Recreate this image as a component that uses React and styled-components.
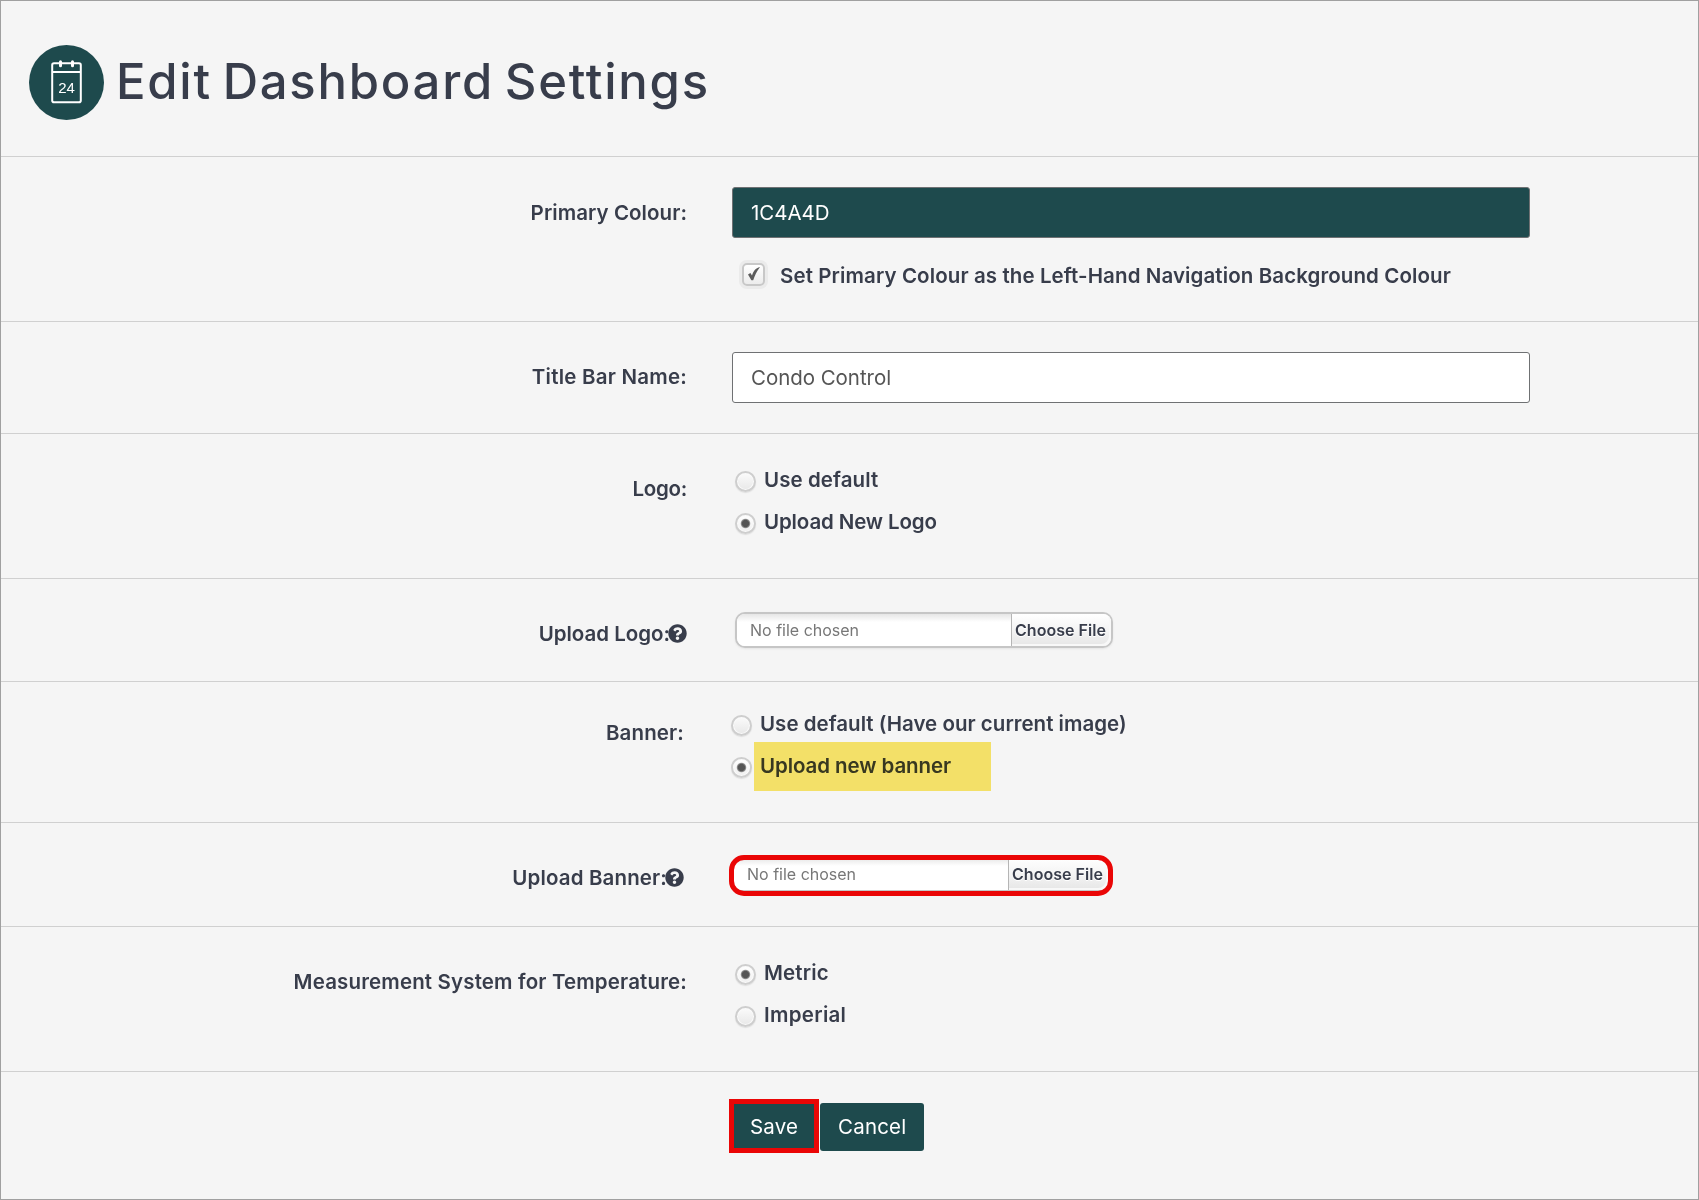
import React, { useState } from 'react';
import styled, { createGlobalStyle } from 'styled-components';
import { FaQuestionCircle } from 'react-icons/fa';

const GlobalStyle = createGlobalStyle`
  * {
    box-sizing: border-box;
  }

  body {
    margin: 0;
    background: #f5f5f5;
    color: #383d4b;
    font-family: Inter, "Liberation Sans", sans-serif;
    font-size: 20.5px;
    line-height: 30px;
  }
`;

const Page = styled.div`
  width: 1699px;
  height: 1200px;
  border: 1px solid #a0a0a0;
  background: #f5f5f5;
  overflow: hidden;
`;

const Header = styled.header`
  height: 156px;
  padding: 44px 0 0 28px;
  border-bottom: 1px solid #d0d0d0;
  display: flex;
  align-items: flex-start;
  gap: 12px;
`;

const Title = styled.h1`
  margin: 7px 0 0;
  font-size: 49px;
  line-height: 60px;
  font-weight: 520;
  letter-spacing: 1.75px;
  word-spacing: -4px;
`;

const Row = styled.div`
  height: ${(p) => p.$height}px;
  border-bottom: 1px solid #d0d0d0;
  display: grid;
  grid-template-columns: ${(p) => (p.$shifted ? 683 : 686)}px 1fr;
  column-gap: 45px;
  align-items: start;
`;

const Label = styled.div`
  margin-top: ${(p) => p.$top || 40}px;
  display: flex;
  justify-content: flex-end;
  align-items: center;
  font-weight: 640;
  letter-spacing: ${(p) => p.$track || 0}px;
  white-space: nowrap;

  svg {
    margin: -2px 0 0 -2px;
    font-size: 19px;
  }
`;

const Field = styled.div`
  padding-top: ${(p) => p.$top}px;
  padding-left: ${(p) => p.$left || 0}px;
`;

const TextBox = styled.input`
  display: block;
  width: 798px;
  height: 51px;
  padding: 0 18px;
  border: 1px solid #6f7173;
  border-radius: 3px;
  background: ${(p) => (p.$filled ? '#1e4a4d' : '#fff')};
  color: ${(p) => (p.$filled ? '#fff' : '#555')};
  font: 400 20.5px Inter, sans-serif;
  letter-spacing: -0.05px;
  outline: none;
`;

const CheckLine = styled.label`
  margin: 23px 0 0 10px;
  display: flex;
  align-items: center;
  gap: 15px;
  font-weight: 640;
  letter-spacing: 0.1px;
`;

const CheckBox = styled.span`
  width: 23px;
  height: 23px;
  margin-top: -4px;
  border: 2px solid #c8c8c8;
  border-radius: 5px;
  background: linear-gradient(#fff, #ececec);
  box-shadow: 0 0 0 3px #ebebeb;
  display: flex;
  align-items: center;
  justify-content: center;
`;

const RadioList = styled.div`
  display: flex;
  flex-direction: column;
  align-items: flex-start;
  gap: 12px;
`;

const RadioLine = styled.label`
  position: relative;
  display: flex;
  align-items: center;
  gap: 8px;
  font-weight: 640;
  letter-spacing: ${(p) => p.$track}px;
  cursor: pointer;
`;

const RadioDot = styled.span`
  width: 21px;
  height: 21px;
  margin-top: 2px;
  border: 2px solid #cecece;
  border-radius: 50%;
  background: ${(p) => (p.$checked
        ? 'radial-gradient(circle, #555 0 3.2px, #8a8a8a 4.2px, transparent 5.2px), linear-gradient(#fff, #f0f0f0)'
        : 'linear-gradient(#fbfbfb, #e8e8e8)')};
  box-shadow: inset 0 0 0 1px #fafafa, 0 1px 1px #dedede;
`;

/* marker strip over the option text */
const Highlight = styled.span`
  position: absolute;
  left: 23px;
  top: -9px;
  width: 237px;
  height: 49px;
  background: #fdea6c;
  mix-blend-mode: multiply;
`;

const FileBox = styled.div`
  position: relative;
  width: 378px;
  height: 36px;
  display: flex;
  border: 2px solid #c6c6c6;
  border-radius: 10px;
  background: #fff;
  box-shadow: 0 1px 2px #e4e4e4;
  font-size: 16px;
  line-height: 33px;
`;

const FileName = styled.span`
  flex: 1;
  padding-left: 13px;
  border-radius: 8px 0 0 8px;
  background: linear-gradient(#e6e6e6, #fff 8px);
  color: #777;
`;

const FileButton = styled.span`
  width: 100px;
  padding-left: 3px;
  border-left: 1px solid #b5b5b5;
  border-radius: 0 8px 8px 0;
  background: linear-gradient(#fff, #f4f4f4 50%, #e6e6e6);
  box-shadow: inset -2px -2px 0 #f8f8f8;
  font-weight: 640;
  letter-spacing: 0.03px;
  text-shadow: 0 1px 0 #fff;
`;

const FileOutline = styled.span`
  position: absolute;
  left: -5px;
  top: -3px;
  width: 384px;
  height: 41px;
  border: 5px solid #ea0606;
  border-radius: 15px;
`;

const Actions = styled.div`
  padding: 31px 0 0 731px;
  display: flex;
  gap: 2px;
`;

const Button = styled.button`
  position: relative;
  width: ${(p) => p.$width}px;
  height: 48px;
  padding: 0 0 2px 18px;
  border: none;
  border-radius: 3px;
  background: #1e4a4d;
  color: #fff;
  font: 400 20.5px Inter, sans-serif;
  letter-spacing: 0.2px;
  text-align: left;
`;

const ButtonOutline = styled.span`
  position: absolute;
  left: -3px;
  top: -4px;
  width: 90px;
  height: 54px;
  border: 5px solid #ea0606;
`;

const CalendarIcon = () => (
    <svg width="75" height="75" viewBox="0 0 75 75">
        <circle cx="37.5" cy="37.5" r="37.5" fill="#1e4a4d" />
        <g fill="none" stroke="#fff" strokeWidth="2">
            <rect x="23.2" y="18.2" width="28.6" height="39" rx="1.8" />
            <path d="M23 27h29" />
            <path d="M31.5 16.8v4M43.5 16.8v4" strokeWidth="3" strokeLinecap="round" />
        </g>
        <text x="37.5" y="47.8" fill="#fff" fontFamily="Liberation Sans" fontSize="15" textAnchor="middle">24</text>
    </svg>
);

const Tick = () => (
    <svg width="15" height="16" viewBox="0 0 15 16">
        <path d="M2 8.4l2.4-1.4 1.6 2.4C7.4 5.5 9.4 2 14 1L13 2.6C10.5 5.8 9 9.5 7.2 14.2L5.4 14.2Z" fill="#5c5c5c" />
    </svg>
);

const Radios = ({ options, value, onChange }) => (
    <RadioList>
        {options.map((o) => (
            <RadioLine key={o.text} $track={o.track} onClick={() => onChange(o.text)}>
                <RadioDot $checked={value === o.text} />
                {o.text}
                {o.marked && <Highlight />}
            </RadioLine>
        ))}
    </RadioList>
);

const FileInput = ({ outlined }) => (
    <FileBox>
        <FileName>No file chosen</FileName>
        <FileButton>Choose File</FileButton>
        {outlined && <FileOutline />}
    </FileBox>
);

const logoOptions = [
    { text: 'Use default', track: 0.08 },
    { text: 'Upload New Logo', track: -0.13 },
];

const bannerOptions = [
    { text: 'Use default (Have our current image)', track: 0.02 },
    { text: 'Upload new banner', track: -0.08, marked: true },
];

const unitOptions = [
    { text: 'Metric', track: 0.15 },
    { text: 'Imperial', track: 0.3 },
];

const App = () => {
    const [logo, setLogo] = useState('Upload New Logo');
    const [banner, setBanner] = useState('Upload new banner');
    const [unit, setUnit] = useState('Metric');

    return (
        <Page>
            <GlobalStyle />
            <Header>
                <CalendarIcon />
                <Title>Edit Dashboard Settings</Title>
            </Header>
            <Row $height={165}>
                <Label $top={41} $track={0.06}>Primary Colour:</Label>
                <Field $top={30}>
                    <TextBox $filled defaultValue="1C4A4D" />
                    <CheckLine>
                        <CheckBox><Tick /></CheckBox>
                        Set Primary Colour as the Left-Hand Navigation Background Colour
                    </CheckLine>
                </Field>
            </Row>
            <Row $height={112}>
                <Label $track={0.22}>Title Bar Name:</Label>
                <Field $top={30}>
                    <TextBox defaultValue="Condo Control" />
                </Field>
            </Row>
            <Row $height={145}>
                <Label $track={-0.3}>Logo:</Label>
                <Field $top={31} $left={3}>
                    <Radios options={logoOptions} value={logo} onChange={setLogo} />
                </Field>
            </Row>
            <Row $height={103}>
                <Label $track={-0.02}>Upload Logo:<FaQuestionCircle /></Label>
                <Field $top={33} $left={3}>
                    <FileInput />
                </Field>
            </Row>
            <Row $height={141} $shifted>
                <Label $top={36} $track={0.12}>Banner:</Label>
                <Field $top={27} $left={2}>
                    <Radios options={bannerOptions} value={banner} onChange={setBanner} />
                </Field>
            </Row>
            <Row $height={104} $shifted>
                <Label $track={0.13}>Upload Banner:<FaQuestionCircle /></Label>
                <Field $top={33} $left={3}>
                    <FileInput outlined />
                </Field>
            </Row>
            <Row $height={145}>
                <Label $track={0.15}>Measurement System for Temperature:</Label>
                <Field $top={31} $left={3}>
                    <Radios options={unitOptions} value={unit} onChange={setUnit} />
                </Field>
            </Row>
            <Actions>
                <Button $width={86}>Save<ButtonOutline /></Button>
                <Button $width={104}>Cancel</Button>
            </Actions>
        </Page>
    );
};

export default App;
